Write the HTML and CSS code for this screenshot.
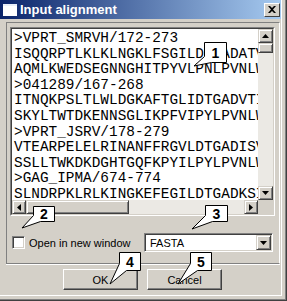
FILE: index.html
```html
<!DOCTYPE html>
<html lang="en">

<head>
  <meta charset="UTF-8" />
  <meta name="viewport" content="width=device-width, initial-scale=1.0" />
  <title>Input alignment</title>
  <link rel="stylesheet" href="styles.css">
</head>

<body>
  <div class="window">
    <div class="titlebar">
      <span class="appicon"></span>
      <span class="title">Input alignment</span>
      <span class="close">
        <svg width="8" height="7" viewBox="0 0 8 7">
          <path d="M0 0h2l2 2 2-2h2L5 3.5 8 7H6L4 5 2 7H0l3-3.5z" fill="#000" />
        </svg>
      </span>
    </div>

    <div class="panel">
      <div class="seqbox">
        <div class="seqinner">
          <div class="seqtext">
            <p>&gt;VPRT_SMRVH/172-273</p>
            <p>ISQQRPTLKLKLNGKLFSGILDTGADATVISY</p>
            <p>AQMLKWEDSEGNNGHITPYVLPNLPVNLWGR</p>
            <p>&gt;041289/167-268</p>
            <p>ITNQKPSLTLWLDGKAFTGLIDTGADVTIIS</p>
            <p>SKYLTWTDKENNSGLIKPFVIPYLPVNLWGR</p>
            <p>&gt;VPRT_JSRV/178-279</p>
            <p>VTEARPELELRINANFFRGVLDTGADISVIS</p>
            <p>SSLLTWKDKDGHTGQFKPYILPYLPVNLWGR</p>
            <p>&gt;GAG_IPMA/674-774</p>
            <p>SLNDRPKLRLKINGKEFEGILDTGADKSIIS</p>
          </div>
          <div class="vscroll">
            <span class="sbtn">
              <svg width="7" height="4" viewBox="0 0 7 4"><path d="M3.5 0L7 4H0z" fill="#000" /></svg>
            </span>
            <span class="thumb vthumb"></span>
            <span class="track"></span>
            <span class="sbtn">
              <svg width="7" height="4" viewBox="0 0 7 4"><path d="M0 0h7L3.5 4z" fill="#000" /></svg>
            </span>
          </div>
          <div class="hscroll">
            <span class="sbtn">
              <svg width="4" height="7" viewBox="0 0 4 7"><path d="M4 0v7L0 3.5z" fill="#000" /></svg>
            </span>
            <span class="thumb hthumb"></span>
            <span class="track"></span>
            <span class="sbtn">
              <svg width="4" height="7" viewBox="0 0 4 7"><path d="M0 0l4 3.5L0 7z" fill="#000" /></svg>
            </span>
          </div>
          <div class="corner"></div>
        </div>
      </div>

      <div class="options">
        <label class="check">
          <span class="checkbox"></span>
          Open in new window
        </label>
        <div class="combo">
          <span class="combo-value">FASTA</span>
          <span class="sbtn dropbtn">
            <svg width="7" height="4" viewBox="0 0 7 4"><path d="M0 0h7L3.5 4z" fill="#000" /></svg>
          </span>
        </div>
      </div>
    </div>

    <div class="buttons">
      <span class="btn">OK</span>
      <span class="btn">Cancel</span>
    </div>

    <!-- numbered callouts over the dialog -->
    <svg class="callouts" width="287" height="301" viewBox="0 0 287 301">
      <g fill="#fff" stroke="#000" stroke-width="1">
        <path d="M204.5 42.5H226.5V62.5H211.5L194 66L204.5 56.5Z" />
        <path d="M33.5 206.5H54.5V221.5H40.5L22 228L33.5 215.5Z" />
        <path d="M205.5 205.5H227.5V221.5H212.5L192 229L205.5 215.5Z" />
        <path d="M119.5 252.5H140.5V270.5H126.5L110 284L119.5 263.5Z" />
        <path d="M190.5 252.5H211.5V270.5H197.5L178 284L190.5 263.5Z" />
      </g>
      <g class="nums" text-anchor="middle">
        <text x="215.5" y="58">1</text>
        <text x="44" y="219">2</text>
        <text x="216.5" y="219">3</text>
        <text x="130" y="267">4</text>
        <text x="201" y="267">5</text>
      </g>
    </svg>
  </div>
</body>

</html>
```

FILE: styles.css
```css
body {
  margin: 0;
  background-color: #d4d0c8;
}

.window {
  position: relative;
  width: 287px;
  height: 301px;
  box-sizing: border-box;
  background-color: #d4d0c8;
  border-right: 1px solid #404040;
  border-bottom: 1px solid #404040;
  box-shadow: inset -1px -1px #808080, inset -4px -4px #d4d0c8, inset -5px -5px #fff;
  font-family: "Liberation Sans", Arial, sans-serif;
  font-size: 11px;
  color: #000;
  overflow: hidden;
}

.titlebar {
  display: flex;
  align-items: center;
  height: 19px;
  margin-right: 5px;
  padding: 0 3px;
  background: linear-gradient(90deg, #0a246a, #a6caf0);
}

.appicon {
  width: 14px;
  height: 10px;
  background-color: #fff;
  border-top: 2px solid #e8eef8;
}

.title {
  flex: 1;
  margin-left: 3px;
  color: #fff;
  font-weight: bold;
  font-size: 13px;
}

.close {
  display: flex;
  align-items: center;
  justify-content: center;
  width: 14px;
  height: 12px;
  margin-right: -2px;
  background-color: #d4d0c8;
  border: 1px solid;
  border-color: #fff #404040 #404040 #fff;
}

.panel {
  margin: 3px 6px 0 6px;
  height: 242px;
  box-sizing: border-box;
  padding: 4px 4px 0 3px;
  border: 1px solid;
  border-color: #808080 #fff #808080 #808080;
  box-shadow: 0 1px #fff;
}

.seqbox {
  height: 189px;
  box-sizing: border-box;
  border: 1px solid;
  border-color: #808080 #fff #fff #808080;
}

.seqinner {
  display: grid;
  grid-template-columns: 1fr 15px;
  grid-template-rows: 1fr 14px;
  height: 100%;
  box-sizing: border-box;
  border: 1px solid;
  border-color: #404040 #d4d0c8 #d4d0c8 #404040;
}

.seqtext {
  background-color: #fff;
  padding: 2px 0 0 2px;
  overflow: hidden;
  font-family: "Liberation Mono", "Courier New", monospace;
  font-size: 14.4px;
  line-height: 15.6px;
  white-space: nowrap;
}

.seqtext p {
  margin: 0;
}

.vscroll,
.hscroll {
  display: flex;
  background-color: #ebe9e4;
}

.vscroll {
  flex-direction: column;
}

.sbtn,
.thumb {
  display: flex;
  align-items: center;
  justify-content: center;
  box-sizing: border-box;
  background-color: #d4d0c8;
  border: 1px solid;
  border-color: #d4d0c8 #404040 #404040 #d4d0c8;
  box-shadow: inset 1px 1px #fff, inset -1px -1px #808080;
}

.vscroll .sbtn {
  height: 14px;
}

.hscroll .sbtn {
  width: 14px;
}

.vthumb {
  height: 10px;
}

.hthumb {
  width: 103px;
}

.track {
  flex: 1;
}

.corner {
  background-color: #d4d0c8;
}

.options {
  display: flex;
  align-items: center;
  justify-content: space-between;
  margin-top: 17px;
  padding: 0 2px 0 2px;
}

.check {
  display: flex;
  align-items: center;
  gap: 4px;
}

.checkbox {
  width: 13px;
  height: 13px;
  box-sizing: border-box;
  background-color: #fff;
  border: 1px solid;
  border-color: #808080 #fff #fff #808080;
  box-shadow: inset 1px 1px #404040, inset -1px -1px #d4d0c8;
}

.combo {
  display: flex;
  align-items: center;
  width: 129px;
  height: 19px;
  box-sizing: border-box;
  padding: 1px;
  background-color: #fff;
  border: 1px solid;
  border-color: #808080 #fff #fff #808080;
  box-shadow: inset 1px 1px #404040, inset -1px -1px #d4d0c8;
}

.combo-value {
  flex: 1;
  padding-left: 4px;
}

.dropbtn {
  width: 15px;
  height: 15px;
}

.buttons {
  display: flex;
  gap: 9px;
  margin: 5px 0 0 63px;
}

.btn {
  display: flex;
  align-items: center;
  justify-content: center;
  width: 75px;
  height: 21px;
  box-sizing: border-box;
  border: 1px solid;
  border-color: #fff #404040 #404040 #fff;
  box-shadow: inset -1px -1px #808080;
}

.callouts {
  position: absolute;
  left: 0;
  top: 0;
  pointer-events: none;
}

.callouts .nums {
  font-family: "Liberation Sans", Arial, sans-serif;
  font-weight: bold;
  font-size: 14px;
}
```
